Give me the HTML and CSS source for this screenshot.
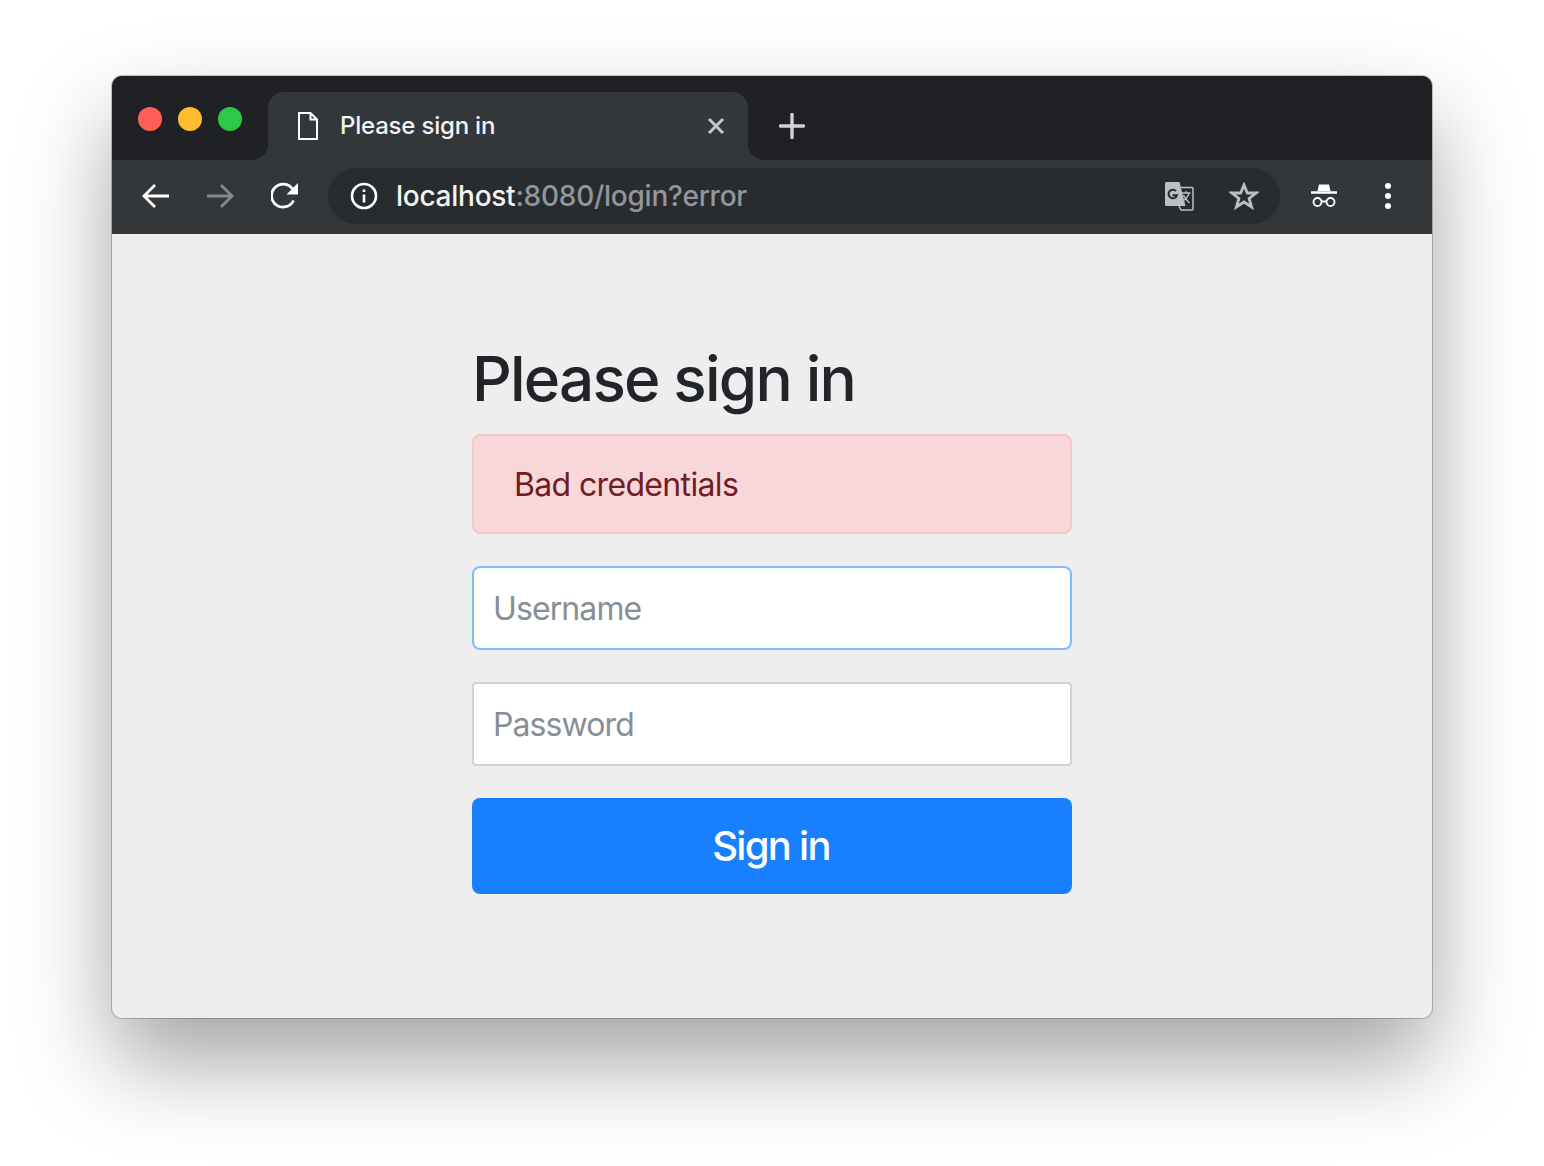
FILE: index.html
```html
<!DOCTYPE html>
<html>
<head>
  <title>Please sign in</title>
  <link rel="stylesheet" href="styles.css">
</head>
<body>
  <div class="window">
    <div class="titlebar">
      <div class="lights">
        <span class="light red"></span>
        <span class="light yellow"></span>
        <span class="light green"></span>
      </div>
      <div class="tab-slot">
        <div class="tab">
          <svg class="tab-icon" width="20" height="28" viewBox="0 0 20 28">
            <path d="M1 1h11.500L19 7.500V27H1z M12.500 1v6.500H19" fill="none" stroke="#fff" stroke-width="2"/>
          </svg>
          <span class="tab-title">Please sign in</span>
          <svg class="tab-close" width="18" height="18" viewBox="0 0 18 18">
            <path d="M2 2l14 14M16 2L2 16" stroke="#c4c7ca" stroke-width="3"/>
          </svg>
        </div>
      </div>
      <div class="tab-rest">
        <svg width="26" height="26" viewBox="0 0 26 26">
          <path d="M13 1.500v23M1.500 13h23" stroke="#d0d2d4" stroke-width="3.400" stroke-linecap="round"/>
        </svg>
      </div>
    </div>
    <div class="toolbar">
      <div class="nav">
        <svg width="28" height="26" viewBox="0 0 28 26">
          <path d="M27 13H3M13 2L2 13l11 11" fill="none" stroke="#fff" stroke-width="2.800"/>
        </svg>
        <svg width="28" height="26" viewBox="0 0 28 26">
          <path d="M1 13h24M15 2l11 11-11 11" fill="none" stroke="#85888b" stroke-width="2.800"/>
        </svg>
        <svg class="reload" width="28" height="28" viewBox="0 0 28 28">
          <path d="M22.500 18.500a11.500 11.500 0 1 1-1-11.500" fill="none" stroke="#fff" stroke-width="2.800"/>
          <path d="M27 1v11.500H15.500z" fill="#fff"/>
        </svg>
      </div>
      <div class="omnibox">
        <svg width="28" height="28" viewBox="0 0 28 28">
          <circle cx="14" cy="14" r="12" fill="none" stroke="#fff" stroke-width="2.600"/>
          <path d="M12.700 12.500h2.600v8h-2.600zM12.700 7.500h2.600v2.600h-2.600z" fill="#fff"/>
        </svg>
        <div class="url"><span class="url-host">localhost</span>:8080/login?error</div>
        <svg class="translate" width="30" height="30" viewBox="0 0 30 30">
          <path d="M2.500 1h13l6 24h-19A1.500 1.500 0 0 1 1 23.500v-21A1.500 1.500 0 0 1 2.500 1z" fill="#bcbfc2"/>
          <path d="M16.500 6.500h11.500a1 1 0 0 1 1 1V28a1 1 0 0 1-1 1H17l-2-4" fill="none" stroke="#bcbfc2" stroke-width="1.500"/>
          <path d="M12 10a4.300 4.300 0 1 0 1 4.200H8.500" fill="none" stroke="#292c2f" stroke-width="2"/>
          <path d="M17.500 12h9M22 10v2M25 12c-1 4-4 7-7 8M19.500 14c1 3 4 6 6 8" fill="none" stroke="#bcbfc2" stroke-width="1.300"/>
        </svg>
        <svg class="star" width="30" height="28" viewBox="0 0 30 28">
          <path d="M15 3l3.300 8h8.700l-6.900 5.500 2.500 8.500-7.600-5-7.600 5 2.500-8.500L3 11h8.700z" fill="none" stroke="#bcbfc2" stroke-width="2.800"/>
        </svg>
      </div>
      <svg class="incognito" width="28" height="26" viewBox="0 0 28 26">
        <path d="M9 1.500h10l1.500 6.500h-13z" fill="#fff"/>
        <path d="M1 9.500h26" stroke="#fff" stroke-width="2.400"/>
        <circle cx="7.500" cy="19" r="4" fill="none" stroke="#fff" stroke-width="1.800"/>
        <circle cx="20.500" cy="19" r="4" fill="none" stroke="#fff" stroke-width="1.800"/>
        <path d="M11.500 18.500h5" stroke="#fff" stroke-width="1.800"/>
      </svg>
      <div class="kebab">
        <span></span><span></span><span></span>
      </div>
    </div>
    <div class="page">
      <form class="signin">
        <h2 class="signin-heading">Please sign in</h2>
        <div class="alert">Bad credentials</div>
        <div class="field focused">Username</div>
        <div class="field">Password</div>
        <div class="btn">Sign in</div>
      </form>
    </div>
  </div>
</body>
</html>
```

FILE: styles.css
```css
html, body {
  height: 100%;
}
body {
  margin: 0;
  background-color: #fff;
  font-family: Inter, "Liberation Sans", sans-serif;
  overflow: hidden;
}
.window {
  width: 1320px;
  height: 942px;
  margin: 76px auto 0;
  border-radius: 10px;
  overflow: hidden;
  background-color: #eee;
  box-shadow: 0 0 0 1px rgba(0,0,0,0.22), 0 44px 90px rgba(0,0,0,0.36);
  display: flex;
  flex-direction: column;
}
.titlebar {
  display: flex;
  height: 84px;
  background-color: #33373a;
}
.lights {
  width: 156px;
  padding: 31px 0 0 26px;
  box-sizing: border-box;
  display: flex;
  gap: 16px;
  background-color: #202124;
  border-bottom-right-radius: 16px;
}
.light {
  width: 24px;
  height: 24px;
  border-radius: 50%;
}
.red { background-color: #ff5f57; }
.yellow { background-color: #ffbd2e; }
.green { background-color: #2dc84a; }
.tab-slot {
  width: 480px;
  padding-top: 16px;
  background-color: #202124;
}
.tab {
  height: 68px;
  padding: 0 23px 2px 30px;
  box-sizing: border-box;
  display: flex;
  align-items: center;
  background-color: #33373a;
  border-radius: 16px 16px 0 0;
}
.tab-icon {
  margin: 2px 22px 0 0;
}
.tab-title {
  flex: 1;
  color: #f1f3f4;
  font-size: 24px;
  font-weight: 500;
  letter-spacing: -0.2px;
}
.tab-close {
  margin-top: 2px;
}
.tab-rest {
  flex: 1;
  padding: 37px 0 0 31px;
  background-color: #202124;
  border-bottom-left-radius: 16px;
}
.toolbar {
  height: 74px;
  padding-bottom: 2px;
  box-sizing: border-box;
  display: flex;
  align-items: center;
  background-color: #33373a;
}
.nav {
  width: 216px;
  padding-left: 30px;
  box-sizing: border-box;
  display: flex;
  align-items: center;
  gap: 36px;
}
.reload {
  margin-left: 1px;
}
.omnibox {
  width: 952px;
  height: 56px;
  padding: 0 22px;
  box-sizing: border-box;
  display: flex;
  align-items: center;
  background-color: #292c2f;
  border-radius: 28px;
}
.url {
  flex: 1;
  margin-left: 18px;
  color: #93969a;
  font-size: 28px;
  font-weight: 500;
  letter-spacing: -0.26px;
}
.url-host {
  color: #f1f3f4;
}
.translate {
  margin-right: 35px;
}
.star {
  margin-right: -1px;
}
.incognito {
  margin-left: 30px;
}
.kebab {
  margin-left: 47px;
  display: flex;
  flex-direction: column;
  gap: 4px;
}
.kebab span {
  width: 6px;
  height: 6px;
  border-radius: 50%;
  background-color: #fff;
}
.page {
  flex: 1;
  padding-top: 107px;
}
.signin {
  width: 600px;
  margin: 0 auto;
}
.signin-heading {
  margin: 0 0 17px;
  color: #212529;
  font-size: 62px;
  font-weight: 500;
  line-height: 76px;
  letter-spacing: -1.8px;
}
.alert {
  height: 100px;
  padding: 0 40px;
  margin-bottom: 32px;
  box-sizing: border-box;
  display: flex;
  align-items: center;
  color: #721c24;
  font-size: 32px;
  letter-spacing: -0.65px;
  background-color: #f8d7da;
  border: 2px solid #f5c6cb;
  border-radius: 8px;
}
.field {
  height: 84px;
  padding: 0 19px;
  margin-bottom: 32px;
  box-sizing: border-box;
  display: flex;
  align-items: center;
  color: #868e96;
  font-size: 32px;
  letter-spacing: -0.9px;
  background-color: #fff;
  border: 2px solid #ced4da;
  border-radius: 4px;
}
.field.focused {
  border-color: #80bdff;
  border-radius: 8px;
}
.btn {
  height: 96px;
  padding: 0 2px 2px 0;
  box-sizing: border-box;
  display: flex;
  align-items: center;
  justify-content: center;
  color: #fff;
  font-size: 40px;
  font-weight: 500;
  letter-spacing: -1.7px;
  background-color: #187fff;
  border-radius: 8px;
}
```
